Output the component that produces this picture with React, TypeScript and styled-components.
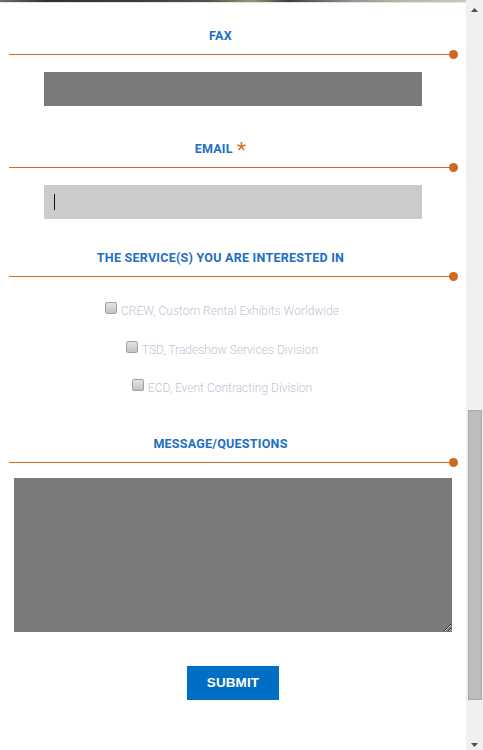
import React from "react";
import styled, { createGlobalStyle } from "styled-components";

const Global = createGlobalStyle`
  html, body { margin: 0; padding: 0; background: #fff; overflow: hidden; }
  * { box-sizing: border-box; }
`;

const Window = styled.div`
  display: flex;
  width: 483px;
  height: 750px;
  overflow: hidden;
`;

const Page = styled.div`
  flex: 1;
  display: flex;
  flex-direction: column;
  font-family: Roboto, "Liberation Sans", sans-serif;
`;

const PhotoEdge = styled.div`
  height: 3px;
  background: linear-gradient(
    90deg,
    #6d7068 0%,
    #2f3130 10%,
    #3c3d38 30%,
    #52544b 45%,
    #9a9570 54%,
    #3c3f3d 62%,
    #8f928a 75%,
    #b6b4a5 85%,
    #c9c8bd 100%
  );
  border-bottom: 1px solid #e4e4e0;
`;

const Form = styled.form`
  display: flex;
  flex-direction: column;
  padding-top: 25px;
`;

const Section = styled.div<{ $gap: number }>`
  display: flex;
  flex-direction: column;
  margin-bottom: ${(p) => p.$gap}px;
`;

const Label = styled.div`
  height: 17px;
  line-height: 16px;
  padding-right: 25px;
  text-align: center;
  font-size: 12.5px;
  font-weight: 700;
  color: #1d6ec4;
  letter-spacing: 0.25px;
  margin-bottom: 9px;
`;

const Star = styled.span`
  color: #d2701f;
  font-family: "Liberation Sans", sans-serif;
  font-size: 24px;
  font-weight: 400;
  line-height: 16px;
  vertical-align: -6px;
  margin-left: 4px;
`;

const Rule = styled.div<{ $after: number }>`
  display: flex;
  align-items: center;
  height: 9px;
  margin: -4px 12px ${(p) => p.$after - 4}px 9px;
`;

const RuleLine = styled.div`
  flex: 1;
  height: 1px;
  background: #cd6a1f;
`;

const RuleDot = styled.div`
  width: 9px;
  height: 9px;
  border-radius: 50%;
  background: #cd6a1f;
  margin-left: -4px;
  margin-right: -4px;
`;

const TextBox = styled.div<{ $tone: "dark" | "light" }>`
  display: flex;
  align-items: center;
  height: 34px;
  margin: 0 44px;
  padding-left: 10px;
  background: ${(p) => (p.$tone === "dark" ? "#7a7a7a" : "#cbcbcb")};
`;

const Caret = styled.span`
  width: 1px;
  height: 16px;
  background: #111;
`;

const Options = styled.div`
  display: flex;
  flex-direction: column;
  align-items: center;
  padding-right: 22px;
  padding-top: 14px;
`;

const Option = styled.label`
  display: flex;
  align-items: center;
  height: 38.5px;
  font-size: 12px;
  font-weight: 300;
  color: #c4c2d6;
`;

const Check = styled.input`
  appearance: none;
  width: 12px;
  height: 12px;
  margin: -6px 4px 0 0;
  border: 1px solid #a0a0a0;
  border-radius: 2px;
  background: linear-gradient(#e4e4e4, #c2c2c2);
`;

const Message = styled.textarea`
  display: block;
  height: 154px;
  margin: 0 14px;
  border: none;
  background: #7a7a7a;
  resize: vertical;
  outline: none;
`;

const SubmitRow = styled.div`
  display: flex;
  justify-content: center;
`;

const Submit = styled.button`
  width: 92px;
  height: 34px;
  border: none;
  background: #006fc3;
  color: #fff;
  font-family: "Liberation Sans", Arial, sans-serif;
  font-weight: 700;
  font-size: 13.5px;
  letter-spacing: 0.1px;
  padding: 0;
`;

const ScrollBar = styled.div`
  width: 17px;
  display: flex;
  flex-direction: column;
  background: #f0f0f0;
`;

const Arrow = styled.div<{ $dir: "up" | "down" }>`
  height: 17px;
  display: flex;
  justify-content: center;
  align-items: ${(p) => (p.$dir === "up" ? "flex-start" : "flex-end")};
  padding: ${(p) => (p.$dir === "up" ? "8px 0 0" : "0 0 3px")};
`;

const Track = styled.div`
  flex: 1;
  display: flex;
  flex-direction: column;
  padding-top: 393px;
`;

const Thumb = styled.div`
  height: 290px;
  margin: 0 1px 0 2px;
  background: #bdbdbd;
  border: 1px solid #a9a9a9;
`;

function Divider({ after }: { after: number }) {
  return (
    <Rule $after={after}>
      <RuleLine />
      <RuleDot />
    </Rule>
  );
}

const services = [
  "CREW, Custom Rental Exhibits Worldwide",
  "TSD, Tradeshow Services Division",
  "ECD, Event Contracting Division",
];

export default function App() {
  return (
    <>
      <Global />
      <Window>
        <Page>
          <PhotoEdge />
          <Form onSubmit={(e) => e.preventDefault()}>
            <Section $gap={35}>
              <Label>FAX</Label>
              <Divider after={17} />
              <TextBox $tone="dark" />
            </Section>
            <Section $gap={31}>
              <Label>
                EMAIL<Star>*</Star>
              </Label>
              <Divider after={17} />
              <TextBox $tone="light">
                <Caret />
              </TextBox>
            </Section>
            <Section $gap={28}>
              <Label>THE SERVICE(S) YOU ARE INTERESTED IN</Label>
              <Divider after={1} />
              <Options>
                {services.map((s) => (
                  <Option key={s}>
                    <Check type="checkbox" />
                    {s}
                  </Option>
                ))}
              </Options>
            </Section>
            <Section $gap={34}>
              <Label>MESSAGE/QUESTIONS</Label>
              <Divider after={15} />
              <Message />
            </Section>
            <SubmitRow>
              <Submit type="submit">SUBMIT</Submit>
            </SubmitRow>
          </Form>
        </Page>
        <ScrollBar>
          <Arrow $dir="up">
            <svg width="7" height="4" viewBox="0 0 7 4">
              <path d="M0 4 L3.5 0 L7 4 Z" fill="#505050" />
            </svg>
          </Arrow>
          <Track>
            <Thumb />
          </Track>
          <Arrow $dir="down">
            <svg width="7" height="4" viewBox="0 0 7 4">
              <path d="M0 0 L7 0 L3.5 4 Z" fill="#505050" />
            </svg>
          </Arrow>
        </ScrollBar>
      </Window>
    </>
  );
}
